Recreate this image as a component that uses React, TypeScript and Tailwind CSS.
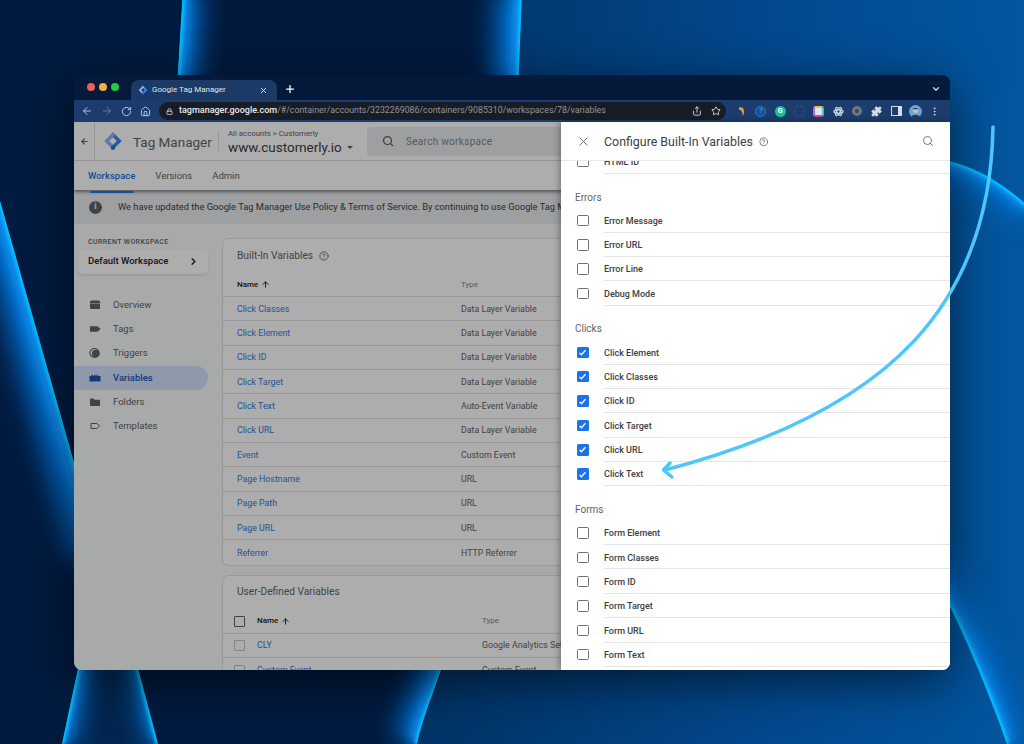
import { ArrowLeft, ArrowRight, ArrowUp, ChevronDown, ChevronRight, CircleHelp, Home, Lock, MoreVertical, Plus, Puzzle, RotateCw, Search, Share, Star, X } from 'lucide-react';
import type { ReactNode } from 'react';

const builtIn = [
  ['Click Classes', 'Data Layer Variable'],
  ['Click Element', 'Data Layer Variable'],
  ['Click ID', 'Data Layer Variable'],
  ['Click Target', 'Data Layer Variable'],
  ['Click Text', 'Auto-Event Variable'],
  ['Click URL', 'Data Layer Variable'],
  ['Event', 'Custom Event'],
  ['Page Hostname', 'URL'],
  ['Page Path', 'URL'],
  ['Page URL', 'URL'],
  ['Referrer', 'HTTP Referrer'],
];

const sections = [
  { label: 'Errors', rows: ['Error Message', 'Error URL', 'Error Line', 'Debug Mode'], checked: false },
  { label: 'Clicks', rows: ['Click Element', 'Click Classes', 'Click ID', 'Click Target', 'Click URL', 'Click Text'], checked: true },
  { label: 'Forms', rows: ['Form Element', 'Form Classes', 'Form ID', 'Form Target', 'Form URL', 'Form Text'], checked: false },
];

function GtmLogo({ size }: { size: number }) {
  return (
    <svg width={size} height={size} viewBox="0 0 24 24" className="shrink-0">
      <path d="M12 1.5 22.5 12 12 22.5 9 19.5 16.5 12 9 4.5z" fill="#4285f4" />
      <path d="M12 1.5 1.5 12 9 19.5 12 16.5 7.5 12 15 4.5z" fill="#8ab4f8" />
      <circle cx="12" cy="20" r="2.6" fill="#246fdb" />
    </svg>
  );
}

// one lit edge of the wallpaper: a wide soft glow and a thin bright core, kept to one side by the clip
function Glow({ d, clip, wide = 34 }: { d: string; clip: string; wide?: number }) {
  return (
    <g clipPath={`url(#${clip})`} fill="none">
      <path d={d} stroke="#0668c4" strokeWidth={wide * 1.6} filter="url(#blurWide)" />
      <path d={d} stroke="#0a8ef0" strokeWidth={wide * 0.6} filter="url(#blurMid)" />
      <path d={d} stroke="#00c4ff" strokeWidth="5" filter="url(#blurThin)" />
    </g>
  );
}

function Wallpaper() {
  return (
    <svg className="absolute inset-0" width="1024" height="744" viewBox="0 0 1024 744">
      <defs>
        <linearGradient id="base" x1="440" x2="1024" y1="0" y2="0" gradientUnits="userSpaceOnUse">
          <stop offset="0" stopColor="#023468" />
          <stop offset="0.6" stopColor="#024a90" />
          <stop offset="1" stopColor="#03569f" />
        </linearGradient>
        <filter id="blurWide" filterUnits="userSpaceOnUse" x="-100" y="-100" width="1300" height="1000"><feGaussianBlur stdDeviation="12" /></filter>
        <filter id="blurMid" filterUnits="userSpaceOnUse" x="-100" y="-100" width="1300" height="1000"><feGaussianBlur stdDeviation="6" /></filter>
        <filter id="blurThin" filterUnits="userSpaceOnUse" x="-100" y="-100" width="1300" height="1000"><feGaussianBlur stdDeviation="1.5" /></filter>
        <clipPath id="clipBand"><path d="M183 -10H522L518 90H177Z" /></clipPath>
        <clipPath id="clipLeft"><path d="M-30 95 100 555V744H-30Z" /></clipPath>
        <clipPath id="clipBottomLeft"><path d="M82 650H133L158 744H62Z" /></clipPath>
        <clipPath id="clipBottomMid"><path d="M450 640C438 685 424 710 417 744H300V640Z" /></clipPath>
        <clipPath id="clipTopArc"><path d="M920 158C960 158 995 176 1030 208V320H920Z" /></clipPath>
        <clipPath id="clipBottomArc"><path d="M925 560C950 600 985 680 1007 744H1040V500H925Z" /></clipPath>
      </defs>
      <rect width="1024" height="744" fill="url(#base)" />
      <path d="M0 0H510V650H450C438 685 424 710 417 744H0Z" fill="#011b40" />
      <path d="M183 -10H522L518 90H177Z" fill="#011a3d" />
      <Glow d="M183 -10 177 90" clip="clipBand" wide={24} />
      <Glow d="M522 -10 518 90" clip="clipBand" wide={32} />
      <Glow d="M-30 95 100 555" clip="clipLeft" wide={34} />
      <path d="M82 650H133L158 744H62Z" fill="#02264f" />
      <Glow d="M82 650 62 744" clip="clipBottomLeft" wide={16} />
      <Glow d="M133 650 158 744" clip="clipBottomLeft" wide={12} />
      <Glow d="M450 640C438 685 424 710 417 744" clip="clipBottomMid" wide={28} />
      <Glow d="M920 158C960 158 995 176 1030 208" clip="clipTopArc" wide={24} />
      <Glow d="M925 560C950 600 985 680 1007 744" clip="clipBottomArc" wide={24} />
    </svg>
  );
}

function Ext({ children }: { children: ReactNode }) {
  return <div className="flex w-[19.3px] justify-center">{children}</div>;
}

function Extensions() {
  return (
    <div className="flex shrink-0 items-center">
      <Ext>
        <svg width="12" height="12" viewBox="0 0 12 12"><path d="M3 2.5C6 1.5 8 3 8 6.5 8 8.5 7.5 10 6.5 10.5 6.5 7 6 5.5 3 4.5Z" fill="#f09a2e" /></svg>
      </Ext>
      <Ext>
        <div className="flex h-[11px] w-[11px] items-center justify-center rounded-full border border-[#2a7fd0] bg-[#174f94] font-['Roboto',sans-serif] text-[7px] text-[#5aaaf0]">?</div>
      </Ext>
      <Ext>
        <div className="flex h-[11px] w-[11px] items-center justify-center rounded-full bg-[#15c39a] font-['Roboto',sans-serif] text-[7px] font-bold text-white">G</div>
      </Ext>
      <Ext>
        <div className="h-[11px] w-[11px] rounded-sm border border-dotted border-[#3f5b86]" />
      </Ext>
      <Ext>
        <div className="h-[11px] w-[11px] rounded-[3px] border-2 border-t-[#f3c13a] border-r-[#3fc1d9] border-b-[#e0457b] border-l-[#b46be0] bg-[#dfe6f0]" />
      </Ext>
      <Ext>
        <svg width="11" height="11" viewBox="0 0 24 24" fill="none" stroke="#c9d3e2" strokeWidth="3">
          <ellipse cx="12" cy="12" rx="10" ry="4" />
          <ellipse cx="12" cy="12" rx="10" ry="4" transform="rotate(60 12 12)" />
          <ellipse cx="12" cy="12" rx="10" ry="4" transform="rotate(120 12 12)" />
        </svg>
      </Ext>
      <Ext>
        <div className="flex h-[10px] w-[10px] items-center justify-center rounded-full bg-[#6f7780]">
          <div className="h-[4px] w-[4px] rounded-full bg-[#3c4553]" />
        </div>
      </Ext>
      <Ext>
        <Puzzle size={11} className="fill-[#d7dde6] text-[#d7dde6]" />
      </Ext>
      <Ext>
        <div className="h-[10px] w-[11px] border-[1.5px] border-r-[4px] border-[#d7dde6]" />
      </Ext>
      <Ext>
        <svg width="13" height="13" viewBox="0 0 13 13">
          <circle cx="6.5" cy="6.5" r="6.5" fill="#5fa8e6" />
          <circle cx="6.5" cy="5.5" r="2.7" fill="#e2b79c" />
          <path d="M2.5 12C3 9 10 9 10.5 12 8 13.5 5 13.5 2.5 12Z" fill="#26384f" />
          <path d="M3.8 4.5C4.5 2.5 8.5 2.5 9.2 4.5 7.5 3.8 5.5 3.8 3.8 4.5Z" fill="#2b2320" />
        </svg>
      </Ext>
      <Ext>
        <MoreVertical size={11} className="text-[#d7dde6]" />
      </Ext>
    </div>
  );
}

function BrowserChrome() {
  return (
    <>
      <div className="flex h-[25px] shrink-0 bg-[#051a3b]">
        <div className="flex w-[57px] items-start gap-[4.5px] pl-[13px] pt-[8px]">
          <div className="h-[7.5px] w-[7.5px] rounded-full bg-[#ee5f5b]" />
          <div className="h-[7.5px] w-[7.5px] rounded-full bg-[#f5b03a]" />
          <div className="h-[7.5px] w-[7.5px] rounded-full bg-[#27c93f]" />
        </div>
        <div className="mt-[5px] flex h-[20px] w-[146px] items-center rounded-t-lg bg-[#1b3a66] pl-[7px] pr-[9px]">
          <GtmLogo size={10} />
          <span className="ml-[4px] flex-1 font-['Roboto',sans-serif] text-[8px] text-[#dfe6f0]">Google Tag Manager</span>
          <X size={9} strokeWidth={2.5} className="text-[#dfe6f0]" />
        </div>
        <Plus size={12} strokeWidth={2.5} className="ml-[7px] mt-[8px] text-white" />
        <div className="flex-1" />
        <ChevronDown size={10} strokeWidth={3} className="mr-[9px] mt-[9px] text-[#d7dde6]" />
      </div>
      <div className="flex h-[22px] shrink-0 items-center bg-[#1b3c6c] pl-[7px]">
        <ArrowLeft size={12} className="text-[#a9c4ea]" />
        <ArrowRight size={12} className="ml-[8px] text-[#5f7da8]" />
        <RotateCw size={11} className="ml-[8px] text-[#c4d4ea]" />
        <Home size={11} className="ml-[8px] text-[#c4d4ea]" />
        <div className="ml-[8px] flex h-[18px] w-[567px] shrink-0 items-center rounded-full bg-[#181c25] pl-[7px] pr-[5px] font-['Roboto',sans-serif]">
          <Lock size={7} strokeWidth={3} className="text-[#c7ccd4]" />
          <span className="ml-[6px] text-[9px] font-medium text-[#e8eaed]">tagmanager.google.com</span>
          <span className="text-[8.8px] text-[#8f949c]">/#/container/accounts/3232269086/containers/9085310/workspaces/78/variables</span>
          <div className="flex-1" />
          <Share size={10} className="text-[#e8eaed]" />
          <Star size={10} className="ml-[9px] text-[#e8eaed]" />
        </div>
        <div className="ml-[6px]">
          <Extensions />
        </div>
      </div>
    </>
  );
}

function SideIcon({ name }: { name: string }) {
  const color = name === 'Variables' ? '#1a56b4' : '#5f6368';
  return (
    <svg width="12" height="12" viewBox="0 0 12 12" className="shrink-0">
      {name === 'Overview' && <path d="M1 3a1.5 1.5 0 0 1 1.5-1.5h7A1.5 1.5 0 0 1 11 3v6a1 1 0 0 1-1 1H2a1 1 0 0 1-1-1V4.5h10V4H1Z" fill={color} />}
      {name === 'Tags' && <path d="M1 3.2h7.5L11.5 6 8.5 8.8H1Z" fill={color} />}
      {name === 'Triggers' && (
        <>
          <circle cx="5.5" cy="6" r="4.5" fill="none" stroke={color} strokeWidth="1.2" />
          <circle cx="6.8" cy="6.5" r="3.8" fill={color} />
        </>
      )}
      {name === 'Variables' && <path d="M.5 4h2V2.8H4V4h1V2.8h1.5V4h1V2.8H9V4h2.5v5.5H.5Z" fill={color} />}
      {name === 'Folders' && <path d="M1 2.5h3.5l1 1.2H11V10H1Z" fill={color} />}
      {name === 'Templates' && <path d="M2 3.5h6L10.5 6 8 8.5H2Z" fill="none" stroke={color} strokeWidth="1" />}
    </svg>
  );
}

function Sidebar() {
  return (
    <div className="w-[148px] shrink-0 pt-[13px] font-['Roboto',sans-serif]">
      <div className="pl-[14px] text-[7px] font-medium tracking-[0.4px] text-[#5f6368]">CURRENT WORKSPACE</div>
      <div className="ml-[4px] mt-[2px] flex h-[24px] w-[130px] items-center justify-between rounded-sm bg-white pl-[10px] pr-[9px] shadow">
        <span className="text-[9.5px] font-medium text-[#202124]">Default Workspace</span>
        <ChevronRight size={11} strokeWidth={3} className="text-[#202124]" />
      </div>
      <div className="mt-[19px]">
        {['Overview', 'Tags', 'Triggers', 'Variables', 'Folders', 'Templates'].map((name) => (
          <div
            key={name}
            className={name === 'Variables'
              ? 'flex h-[24.35px] w-[134px] items-center gap-[12px] rounded-r-full bg-[#d2e3fc] pl-[15px] text-[9.5px] font-medium text-[#1a56b4]'
              : 'flex h-[24.35px] w-[134px] items-center gap-[12px] pl-[15px] text-[9.5px] text-[#5f6368]'}
          >
            <SideIcon name={name} />
            <span>{name}</span>
          </div>
        ))}
      </div>
    </div>
  );
}

function PageBehind() {
  return (
    <div className="flex h-full flex-col bg-[#f8f9fa] font-['Roboto',sans-serif]">
      <div className="flex h-[39px] shrink-0 items-center border-b border-[#e0e0e0] bg-white">
        <div className="flex h-full w-[21px] items-center justify-center border-r border-[#e0e0e0]">
          <ArrowLeft size={9} strokeWidth={3} className="text-[#5f6368]" />
        </div>
        <div className="ml-[8px]"><GtmLogo size={20} /></div>
        <span className="ml-[10px] mt-[2px] w-[75px] shrink-0 whitespace-nowrap text-[13.5px] text-[#5f6368]">Tag Manager</span>
        <div className="ml-[10px] h-[20px] w-px bg-[#e0e0e0]" />
        <div className="ml-[9px] mt-[3px] flex w-[139px] shrink-0 flex-col">
          <span className="text-[7.8px] leading-[9px] text-[#5f6368]">All accounts &gt; Customerly</span>
          <span className="flex items-center text-[13.5px] leading-[18px] text-[#3c4043]">
            www.customerly.io
            <span className="ml-[5px] h-0 w-0 border-x-[3px] border-t-[3px] border-x-transparent border-t-[#5f6368]" />
          </span>
        </div>
        <div className="flex h-[29px] flex-1 items-center rounded bg-[#e8eaed] pl-[15px]">
          <Search size={12} strokeWidth={2.5} className="text-[#5f6368]" />
          <span className="ml-[12px] text-[10px] tracking-[0.3px] text-[#80868b]">Search workspace</span>
        </div>
      </div>
      <div className="relative flex h-[29px] shrink-0 items-center gap-[20px] bg-white pl-[14px] pt-[1px] text-[9.5px] text-[#5f6368] shadow-[0_2px_3px_rgba(0,0,0,0.45)]">
        <span className="relative font-medium text-[#1a73e8]">
          Workspace
          <span className="absolute -bottom-[10px] left-[2px] h-[2px] w-[44px] rounded-t bg-[#1a73e8]" />
        </span>
        <span>Versions</span>
        <span>Admin</span>
      </div>
      <div className="flex h-[34px] shrink-0 items-center overflow-hidden whitespace-nowrap bg-[#e8eaed] pl-[15px] text-[9.3px] text-[#3c4043]">
        <div className="flex h-[13px] w-[13px] shrink-0 items-center justify-center rounded-full bg-[#5f6368] text-[9px] font-bold text-[#e8eaed]">i</div>
        <span className="ml-[16px]">We have updated the Google Tag Manager Use Policy &amp; Terms of Service. By continuing to use Google Tag Manager, you agree to the updated terms.</span>
      </div>
      <div className="flex min-h-0 flex-1 overflow-hidden">
        <Sidebar />
        <div className="min-w-0 flex-1 pt-[14px] text-[8.8px]">
          <div className="rounded-t-md rounded-bl-md border border-r-0 border-[#e0e0e0] bg-white">
            <div className="flex h-[33px] items-center gap-[6px] pl-[14px] text-[10.2px] text-[#5f6368]">
              Built-In Variables
              <CircleHelp size={10} className="text-[#5f6368]" />
            </div>
            <div className="flex h-[25px] items-center border-b border-[#e0e0e0] pl-[14px] pt-[1px] text-[8px]">
              <span className="flex w-[224px] items-center gap-[3px] font-medium text-[#202124]">Name <ArrowUp size={9} strokeWidth={2.5} /></span>
              <span className="text-[#80868b]">Type</span>
            </div>
            {builtIn.map(([name, type], i) => (
              <div key={name} className={i === builtIn.length - 1 ? 'flex h-[24.35px] items-center pl-[14px] pt-[1px]' : 'flex h-[24.35px] items-center border-b border-[#e0e0e0] pl-[14px] pt-[1px]'}>
                <span className="w-[224px] text-[#2f7de1]">{name}</span>
                <span className="text-[#5f6368]">{type}</span>
              </div>
            ))}
          </div>
          <div className="mt-[9px] rounded-t-md border border-r-0 border-[#e0e0e0] bg-white">
            <div className="flex h-[33px] items-center pb-[2px] pl-[14px] text-[10.2px] text-[#5f6368]">User-Defined Variables</div>
            <div className="flex h-[25px] items-center border-b border-[#e0e0e0] pl-[11px] pt-[1px] text-[8px]">
              <div className="h-[11px] w-[11px] rounded-[1px] border border-[#5f6368]" />
              <span className="ml-[12px] flex w-[225px] items-center gap-[3px] font-medium text-[#202124]">Name <ArrowUp size={9} strokeWidth={2.5} /></span>
              <span className="text-[#80868b]">Type</span>
            </div>
            {[['CLY', 'Google Analytics Settings'], ['Custom Event', 'Custom Event']].map(([name, type]) => (
              <div key={name} className="flex h-[24.35px] items-center whitespace-nowrap border-b border-[#e0e0e0] pl-[11px] pt-[1px]">
                <div className="h-[11px] w-[11px] shrink-0 rounded-[1px] border border-[#bdc1c6]" />
                <span className="ml-[12px] w-[225px] shrink-0 text-[#2f7de1]">{name}</span>
                <span className="text-[#5f6368]">{type}</span>
              </div>
            ))}
          </div>
        </div>
      </div>
    </div>
  );
}

function CheckBox({ checked }: { checked: boolean }) {
  if (checked) {
    return (
      <div className="flex h-[11.5px] w-[11.5px] shrink-0 items-center justify-center rounded-[1.5px] bg-[#1a73e8]">
        <svg width="9" height="9" viewBox="0 0 24 24" fill="none" stroke="white" strokeWidth="3.5"><path d="M4 13l5 5L20 6" /></svg>
      </div>
    );
  }
  return <div className="h-[11.5px] w-[11.5px] shrink-0 rounded-[1.5px] border border-[#6f7377]" />;
}

function Row({ label, checked }: { label: string; checked: boolean }) {
  return (
    <div className="flex h-[24.35px] items-center pl-[16px]">
      <CheckBox checked={checked} />
      <div className="ml-[15.5px] flex h-full flex-1 items-center border-b border-[#e5e5e5] pt-[3px] text-[9px] font-medium text-[#3c4043]">{label}</div>
    </div>
  );
}

function ConfigurePanel() {
  return (
    <div className="absolute bottom-0 right-0 top-0 flex w-[389px] flex-col bg-white font-['Roboto',sans-serif] shadow-[-2px_0_6px_rgba(0,0,0,0.3)]">
      <div className="relative z-10 flex h-[39px] shrink-0 items-center border-b border-[#e8e8e8] bg-white pl-[15px] pr-[16px]">
        <X size={15} strokeWidth={1.5} className="text-[#5f6368]" />
        <span className="ml-[13px] mt-[2px] text-[12.4px] text-[#3c4043]">Configure Built-In Variables</span>
        <CircleHelp size={9.5} className="ml-[6px] mt-[2px] text-[#5f6368]" />
        <div className="flex-1" />
        <Search size={12} strokeWidth={1.75} className="text-[#5f6368]" />
      </div>
      <div className="min-h-0 flex-1 overflow-hidden">
        <div className="-mt-[11.5px]">
          <Row label="HTML ID" checked={false} />
          {sections.map((s) => (
            <div key={s.label}>
              <div className="flex h-[34.5px] items-center pl-[14px] pt-[12px] text-[10px] text-[#5f6368]">{s.label}</div>
              {s.rows.map((r) => <Row key={r} label={r} checked={s.checked} />)}
            </div>
          ))}
        </div>
      </div>
    </div>
  );
}

export default function App() {
  return (
    <div className="relative h-[744px] w-[1024px] overflow-hidden">
      <Wallpaper />
      <div className="absolute left-[74px] top-[75px] flex h-[595px] w-[876px] flex-col overflow-hidden rounded-lg shadow-[0_12px_50px_rgba(0,0,0,0.6)]">
        <BrowserChrome />
        <div className="relative min-h-0 flex-1">
          <PageBehind />
          <div className="absolute inset-0 bg-black/32" />
          <ConfigurePanel />
        </div>
      </div>
      <svg className="absolute inset-0" width="1024" height="744" viewBox="0 0 1024 744" fill="none" stroke="#4cc6fb" strokeWidth="3.5" strokeLinecap="round" strokeLinejoin="round">
        <path d="M993 127C990 300 895 410 665 470" />
        <path d="M670 463 663.5 470 672 477" />
      </svg>
    </div>
  );
}
